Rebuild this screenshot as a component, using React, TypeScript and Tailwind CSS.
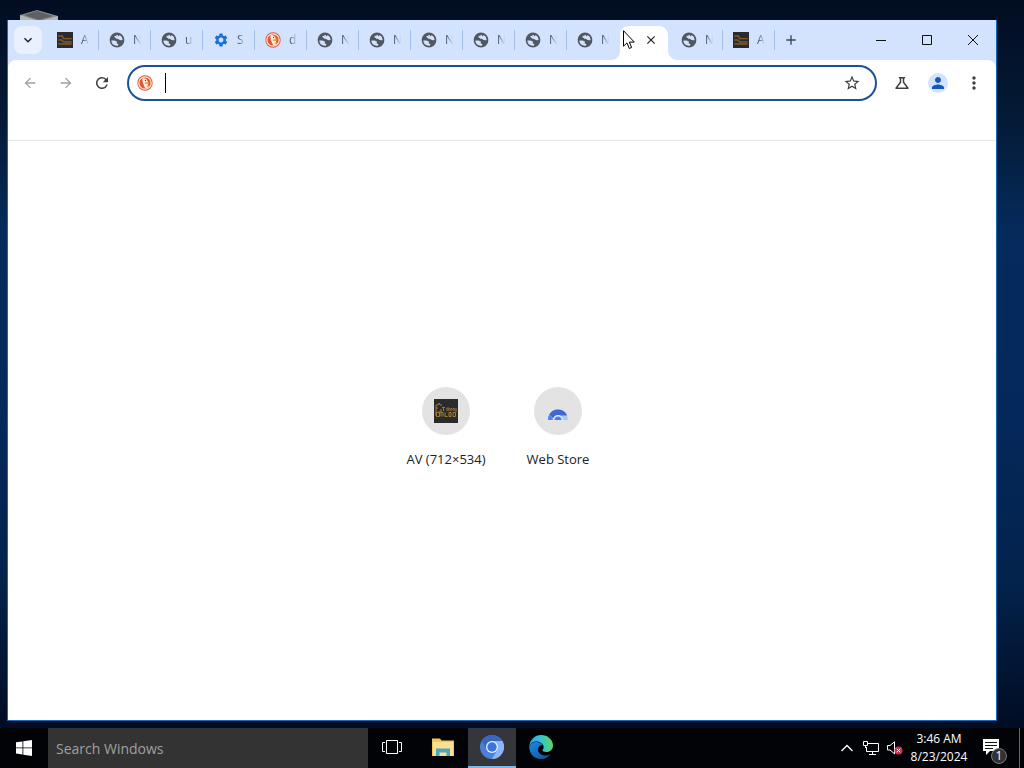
import type { ReactNode } from 'react';
import { MdArrowBack, MdArrowForward, MdRefresh, MdStarBorder, MdOutlineScience, MdPerson, MdMoreVert, MdSettings, MdKeyboardArrowDown, MdAdd, MdClose } from 'react-icons/md';

function Globe() {
  return (
    <svg viewBox="0 0 16 16" className="size-4 shrink-0">
      <circle cx="8" cy="8" r="7.4" fill="#515761" />
      <path d="M2.300 8.600c1.600-.3 4.200-.3 5.200.7.800.8-.2 1.500.5 2.100.6.500 1.500.3 1.400 1.300-.1.600-.7 1-1.600 1.100A5.700 5.700 0 0 1 2.300 8.600z" fill="#d3e3fd" />
      <path d="M8.800 2.400c-.2 1.100-3 .9-3.500 2.200-.3 1 1.200.9 1.600 1.600.5.9 2.300.4 3 1.300.6.800 2 1 3.600.6A5.700 5.700 0 0 0 10.600 3c-.1 1-.9 1.300-1.700 1.300 0-.6.300-1.200-.1-1.900z" fill="#d3e3fd" />
    </svg>
  );
}

function Duck() {
  return (
    <svg viewBox="0 0 16 16" className="size-4 shrink-0">
      <circle cx="8" cy="8" r="7.700" fill="#df5937" />
      <circle cx="8" cy="8" r="6.200" fill="none" stroke="#fbe6df" strokeWidth="1.200" />
      <path d="M5.300 3.700c2.200-1.100 5.200.2 5.400 3.300.1 2 .3 3.500 1 5.300l-3.200 1.300C7 11 5.600 8 5.300 3.700z" fill="#fff3e8" />
      <path d="M7.800 7.300h4v1.600h-4zM8.600 11l2.600-.7v1.800z" fill="#f5a623" />
      <circle cx="8.500" cy="5.500" r=".7" fill="#6b3b33" />
    </svg>
  );
}

function ArtIcon({ large = false }: { large?: boolean }) {
  return (
    <svg viewBox="0 0 24 24" className={large ? 'size-6' : 'size-4 shrink-0'}>
      <path fill="#2b2b2e" d="M0 0h24v24H0z" />
      {large ? (
        <g fill="none" stroke="#a67c2c" strokeWidth="1">
          <path d="M2 17V6M2 6h2l1-2 1 2h2M4 9H2M4 13h3v-3M8 8.500h3M9.500 8.500V12M13 12V9h2v3M17 12V9l1.500 1.500L20 9v3M22 9v4" />
          <path d="M2.500 13.500v4h3v-4zM7 17.500v-4h2v4M11 13.500v4h2.500M15 13.500h2v4h-2zM19 17.500v-4h2.500v4z" />
        </g>
      ) : (
        <path d="M2 6h6l2 4h12M2 12h5l3 3h12M2 18h20" fill="none" stroke="#875a2c" strokeWidth="2" />
      )}
    </svg>
  );
}

type TabInfo = { icon: 'art' | 'globe' | 'gear' | 'duck'; title: string };

const before: TabInfo[] = [
  { icon: 'art', title: 'AV (712×534)' },
  { icon: 'globe', title: 'New Tab' },
  { icon: 'globe', title: 'untitled' },
  { icon: 'gear', title: 'Settings' },
  { icon: 'duck', title: 'duckduckgo' },
  { icon: 'globe', title: 'New Tab' },
  { icon: 'globe', title: 'New Tab' },
  { icon: 'globe', title: 'New Tab' },
  { icon: 'globe', title: 'New Tab' },
  { icon: 'globe', title: 'New Tab' },
  { icon: 'globe', title: 'New Tab' },
];
const after: TabInfo[] = [
  { icon: 'globe', title: 'New Tab' },
  { icon: 'art', title: 'AV (712×534)' },
];

function TabIcon({ icon }: { icon: TabInfo['icon'] }) {
  if (icon === 'art') return <ArtIcon />;
  if (icon === 'gear') return <MdSettings className="size-4 shrink-0 text-[#1a6fd8]" />;
  if (icon === 'duck') return <Duck />;
  return <Globe />;
}

function Tab({ tab, divider = true }: { tab: TabInfo; divider?: boolean }) {
  return (
    <div className="flex h-10 w-13 shrink-0 items-center">
      <button aria-label={tab.title} className="flex min-w-0 flex-1 items-center gap-2 pl-2.5">
        <TabIcon icon={tab.icon} />
        <span className="w-2 overflow-hidden text-left text-xs whitespace-nowrap text-[#4b5a72] [mask-image:linear-gradient(90deg,#000_20%,transparent)]">{tab.title[0]}</span>
      </button>
      <span className={divider ? 'h-5 w-px bg-[#a3bfe8]' : 'h-5 w-px'} />
    </div>
  );
}

function ToolButton({ label, className = '', children }: { label: string; className?: string; children: ReactNode }) {
  return (
    <button aria-label={label} className={`flex size-9 shrink-0 items-center justify-center text-[#3c4043] ${className}`}>
      {children}
    </button>
  );
}

function TabStrip() {
  return (
    <div className="flex h-10 shrink-0 items-center bg-[#d3e3fd] pl-1.5">
      <button aria-label="Search tabs" className="mr-[5px] flex size-7 shrink-0 items-center justify-center rounded-lg bg-[#e9f1fe] text-[#1f1f1f]">
        <MdKeyboardArrowDown className="size-4" />
      </button>
      {before.map((t, i) => <Tab key={i} tab={t} divider={i < before.length - 1} />)}
      <div className="relative flex h-10 w-13 shrink-0 items-end justify-center">
        <svg viewBox="0 0 68 34" className="absolute -left-2 bottom-0 h-[34px] w-[68px]" fill="#fff">
          <path d="M0 34c6 0 9-4 9-10V9c0-5 4-9 9-9h30c5 0 9 4 9 9v15c0 6 4 10 10 10z" />
        </svg>
        <button aria-label="Close tab" className="relative mb-3 ml-3 flex size-4 items-center justify-center text-[#1f1f1f]">
          <MdClose className="size-3.5" />
        </button>
      </div>
      {after.map((t, i) => <Tab key={i} tab={t} />)}
      <button aria-label="New tab" className="flex size-8 shrink-0 items-center justify-center text-[#3c4552]">
        <MdAdd className="size-4" />
      </button>
      <div className="ml-auto flex h-10">
        <button aria-label="Minimize" className="flex w-[46px] items-center justify-center">
          <svg viewBox="0 0 10 10" className="size-2.5"><path d="M0 5.500h10" stroke="#111" /></svg>
        </button>
        <button aria-label="Maximize" className="flex w-[46px] items-center justify-center">
          <svg viewBox="0 0 10 10" className="size-2.5"><path d="M.5.5h9v9h-9z" fill="none" stroke="#111" /></svg>
        </button>
        <button aria-label="Close" className="flex w-[46px] items-center justify-center">
          <svg viewBox="0 0 10 10" className="size-2.5"><path d="M0 0l10 10M10 0L0 10" stroke="#111" /></svg>
        </button>
      </div>
    </div>
  );
}

function Toolbar() {
  return (
    <div className="bg-[#d3e3fd]">
      <div className="flex h-[46px] items-center rounded-t-lg bg-white px-1">
        <ToolButton label="Back" className="opacity-50"><MdArrowBack className="size-4" /></ToolButton>
        <ToolButton label="Forward" className="opacity-50"><MdArrowForward className="size-4" /></ToolButton>
        <ToolButton label="Reload"><MdRefresh className="size-[18px]" /></ToolButton>
        <div className="mx-[7px] flex h-9 min-w-0 flex-1 items-center rounded-full border-2 border-[#1d4f9f] pr-3.5 pl-2">
          <Duck />
          <span className="ml-3 h-5 w-px shrink-0 bg-black" />
          <input aria-label="Address and search bar" className="min-w-0 flex-1 bg-transparent text-sm outline-none" />
          <button aria-label="Bookmark this tab" className="text-[#3c4043]"><MdStarBorder className="size-[18px]" /></button>
        </div>
        <ToolButton label="Labs"><MdOutlineScience className="size-[18px]" /></ToolButton>
        <ToolButton label="Profile">
          <span className="flex size-5 items-center justify-center rounded-full bg-[#d3e3fd] text-[#1556c0]"><MdPerson className="size-[18px]" /></span>
        </ToolButton>
        <ToolButton label="Menu"><MdMoreVert className="size-5" /></ToolButton>
      </div>
    </div>
  );
}

function StoreIcon() {
  return (
    <svg viewBox="0 0 24 24" className="size-6">
      <path d="M2 21a10 10.500 0 0 1 20 0z" fill="#a9c6fa" />
      <path d="M3.300 15.500a10 10 0 0 1 17.400 0l.3 1H12a5 5 0 0 0-4.600 3z" fill="#4068cf" />
      <path d="M2 21a10 10 0 0 1 1.600-6l3.600 6z" fill="#4f83ec" />
      <path d="M7 21a5 5 0 0 1 10 0z" fill="#e5eefc" />
      <path d="M8.500 21a3.500 3.500 0 0 1 7 0z" fill="#4a7be8" />
    </svg>
  );
}

function Shortcut({ label, children }: { label: string; children: ReactNode }) {
  return (
    <a href="#" className="flex w-28 flex-col items-center gap-4">
      <span className="flex size-12 items-center justify-center rounded-full bg-[#e3e3e3]">{children}</span>
      <span className="text-[13px] leading-4 text-[#202124]">{label}</span>
    </a>
  );
}

function TaskButton({ label, active = false, children }: { label: string; active?: boolean; children: ReactNode }) {
  return (
    <button aria-label={label} className={`flex h-10 w-12 shrink-0 items-center justify-center border-b-2 ${active ? 'border-[#76b9ed] bg-[#34363b]' : 'border-transparent'}`}>
      {children}
    </button>
  );
}

function Taskbar() {
  return (
    <div className="flex h-10 shrink-0 items-center bg-[#020306] text-white">
      <button aria-label="Start" className="flex h-10 w-12 shrink-0 items-center justify-center">
        <svg viewBox="0 0 16 16" className="size-4" fill="#fff">
          <path d="M0 2.300 6.500 1.400v6.100H0zM7.300 1.300 16 0v7.500H7.300zM0 8.300h6.500v6.200L0 13.600zM7.300 8.300H16V16l-8.700-1.300z" />
        </svg>
      </button>
      <input aria-label="Search Windows" placeholder="Search Windows" className="h-10 w-80 bg-[#333333] px-2 text-sm placeholder:text-[#a0a0a0] outline-none" />
      <TaskButton label="Task view">
        <svg viewBox="0 0 20 16" className="h-4 w-5" fill="none" stroke="#fff"><path d="M4.500 1.500h11v13h-11zM3 3.500H.5v9H3M17 3.500h2.500v9H17" /></svg>
      </TaskButton>
      <div className="ml-[3px] flex gap-px">
        <TaskButton label="File Explorer">
          <svg viewBox="0 0 22 20" className="h-5 w-[22px]">
            <path d="M0 1.500h8l1.500 2H22V19H0z" fill="#f0c75e" />
            <path d="M1 5h20v14H1z" fill="#fbe08e" />
            <path d="M4 19v-7.500h14V19h-3.500v-3.500h-7V19z" fill="#4aa7c4" />
          </svg>
        </TaskButton>
        <TaskButton label="Chromium" active>
          <svg viewBox="0 0 24 24" className="size-6">
            <circle cx="12" cy="12" r="12" fill="#4a80dc" />
            <path d="M12 6h10.400A12 12 0 0 1 12 24l5.200-9z" fill="#8fb4f7" />
            <path d="M1.600 6A12 12 0 0 1 22.400 6H12a6 6 0 0 0-5.200 9z" fill="#3867bf" />
            <circle cx="12" cy="12" r="6" fill="#eaf2ff" />
            <circle cx="12" cy="12" r="4.700" fill="#3975dd" />
          </svg>
        </TaskButton>
        <TaskButton label="Microsoft Edge">
          <svg viewBox="0 0 24 24" className="size-6">
            <defs>
              <linearGradient id="edgeTop" x1="0" y1=".5" x2="1" y2=".4"><stop stopColor="#299ee5" /><stop offset=".5" stopColor="#35c1d5" /><stop offset="1" stopColor="#62d65c" /></linearGradient>
              <linearGradient id="edgeSide" x1="0" y1="0" x2="1" y2="1"><stop stopColor="#1b8be0" /><stop offset="1" stopColor="#104f97" /></linearGradient>
            </defs>
            <path d="M.3 11C1 4.500 6 0 12 0c7 0 12 5 12 10.500 0 4-3 6.500-6.500 6.500-2.500 0-4-.8-4-1.700 0-.7 1.200-1.200 1.200-3.300C14.700 9 11 6.500 7.500 6.500 4 6.500 1.500 8.500.3 11z" fill="url(#edgeTop)" />
            <path d="M.2 11.500C1.500 8 5 6.500 8 7c3 .4 5.500 2 5.500 3-3 0-4.500 2.300-4.500 4.500 0 4 4 6.300 8 6 2 0 3.500-1 4.700-1.600C19.500 22 16 24 12 24 5 24 .2 18.500.2 11.500z" fill="url(#edgeSide)" />
          </svg>
        </TaskButton>
      </div>
      <div className="ml-auto flex h-10 items-center">
        <button aria-label="Show hidden icons" className="flex w-6 justify-center">
          <svg viewBox="0 0 12 8" className="h-2 w-3" fill="none" stroke="#fff" strokeWidth="1.300"><path d="M.5 7 6 1.500 11.500 7" /></svg>
        </button>
        <button aria-label="Network" className="flex w-6 justify-center">
          <svg viewBox="0 0 16 14" className="h-3.5 w-4" fill="none" stroke="#fff"><path d="M5 2.500h10.500v8H3.500V6M.5.5h4v4h-4zM2.500 4.500V7M9.500 10.500v3M6 13.500h7" /></svg>
        </button>
        <button aria-label="Volume muted" className="flex w-6 justify-center">
          <svg viewBox="0 0 16 14" className="h-3.5 w-4"><path d="M.5 4.500H3L7.500.8v12L3 9H.5z" fill="none" stroke="#fff" /><circle cx="11.500" cy="9.500" r="4" fill="#d5304c" /><path d="m9.800 7.800 3.400 3.400m0-3.400-3.400 3.400" stroke="#fff" /></svg>
        </button>
        <div className="w-16 text-center text-xs leading-[18px] whitespace-nowrap">
          <div>3:46 AM</div>
          <div>8/23/2024</div>
        </div>
        <button aria-label="1 notification" className="relative flex h-10 w-12 items-center pl-2.5">
          <svg viewBox="0 0 26 26" className="size-[26px]">
            <path d="M2 4h16v12h-9l-4 4v-4H2z" fill="#fff" />
            <path d="M4 7.500h12M4 10.500h12M4 13.500h8" stroke="#111" />
          </svg>
          <span className="absolute right-3 bottom-1 flex size-4 items-center justify-center rounded-full border border-[#777] bg-[#333] text-xs">1</span>
        </button>
        <span className="mr-1 h-10 w-px bg-[#666]" />
      </div>
    </div>
  );
}

export default function App() {
  return (
    <div className="relative flex h-screen flex-col overflow-hidden bg-[linear-gradient(180deg,#020d22_0%,#041a35_15%,#042b5c_30%,#04285a_55%,#03234d_75%,#010d24_94%)] font-['Open_Sans','Noto_Sans',sans-serif]">
      <svg viewBox="0 0 40 14" className="absolute top-2 left-[19px] h-3.5 w-10">
        <path d="M1 7 18 2l21 6v6H1z" fill="#87898c" /><path d="m5 7 13-4 16 5-14 4z" fill="#5e6164" /><path d="m1 7 19 6 19-5v6H1z" fill="#b4b6b8" />
      </svg>
      <div className="relative flex min-h-0 flex-1 flex-col pt-5 pr-[27px] pb-[7px] pl-[7px]">
        <div className="flex min-h-0 flex-1 flex-col border-r border-b border-l border-[#1768b5] bg-white">
          <TabStrip />
          <Toolbar />
          <div className="h-[35px] shrink-0 border-b border-[#e6e6e6] bg-white" />
          <main className="flex min-h-0 flex-1 items-center justify-center pb-2">
            <div className="flex">
              <Shortcut label="AV (712×534)"><ArtIcon large /></Shortcut>
              <Shortcut label="Web Store"><StoreIcon /></Shortcut>
            </div>
          </main>
        </div>
      </div>
      <Taskbar />
      <svg viewBox="0 0 12 20" className="pointer-events-none absolute top-[30px] left-[623px] h-5 w-3">
        <path d="M.5.700v15.500L4 12.900l2.300 5.600 2.300-1-2.300-5.400h5z" fill="#fff" stroke="#000" />
      </svg>
    </div>
  );
}
